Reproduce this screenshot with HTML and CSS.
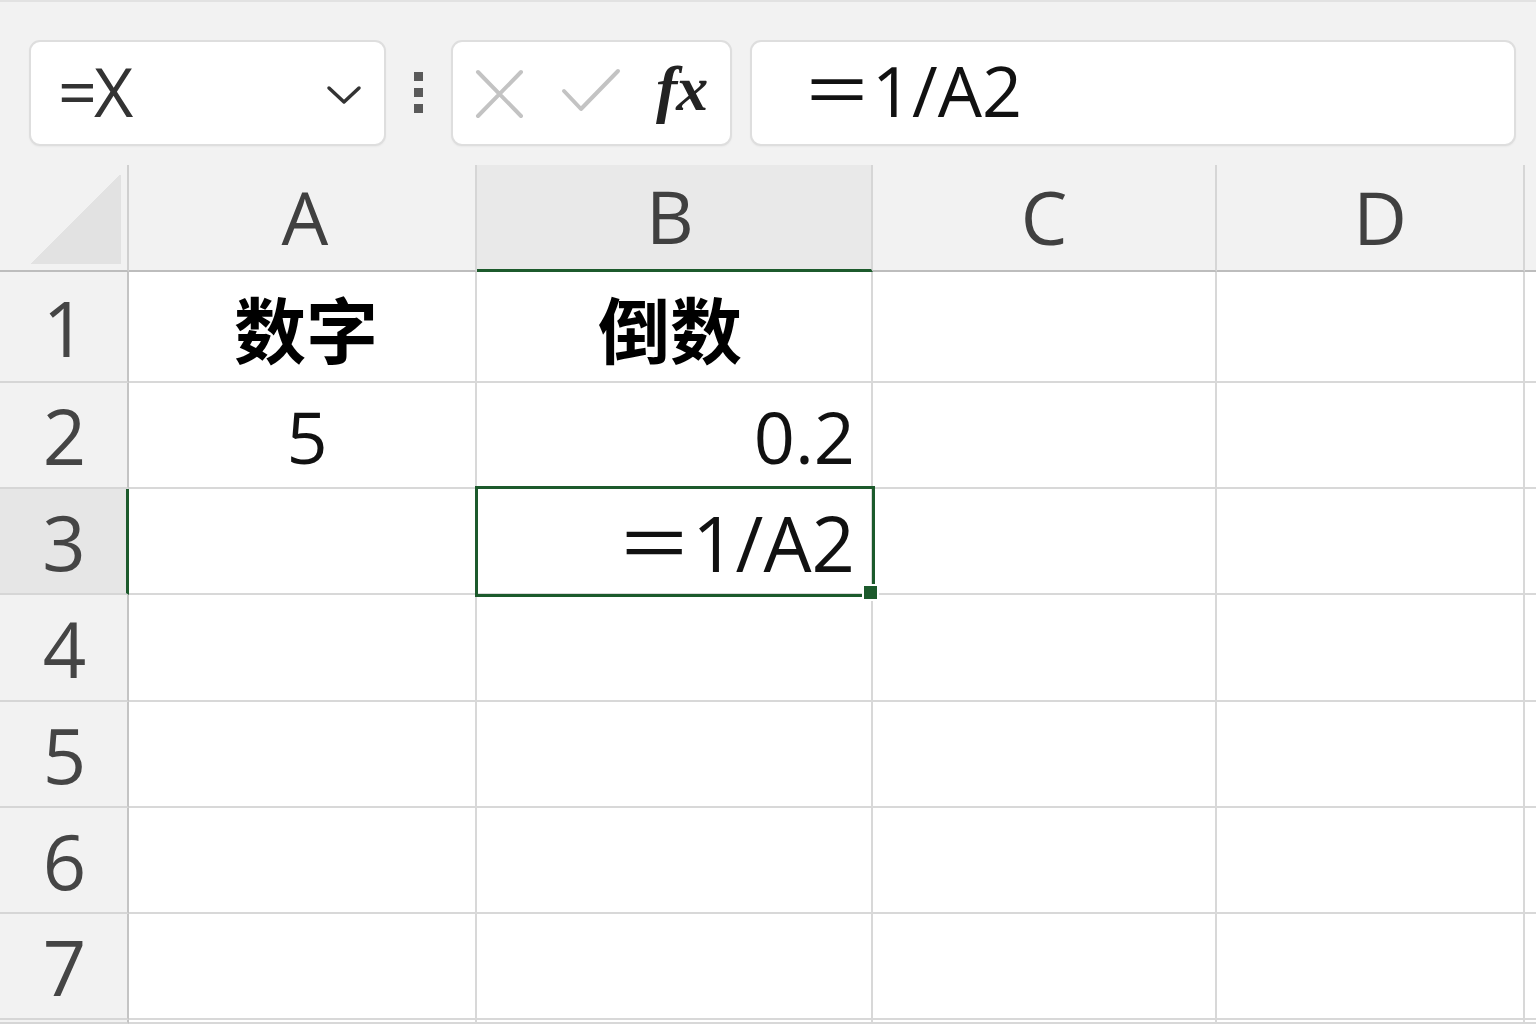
FILE: index.html
```html
<!DOCTYPE html>
<html lang="zh-CN">
<head>
<meta charset="utf-8">
<title>Excel</title>
<link rel="stylesheet" href="styles.css">
</head>
<body>
<div class="app">
  <div class="toolbar">
    <div class="namebox">
      <span class="name">=X</span>
      <svg class="chev" width="36" height="22" viewBox="0 0 36 22"><path d="M3 4 L18 18 L33 4" fill="none" stroke="#333" stroke-width="3.5" stroke-linecap="round" stroke-linejoin="round"/></svg>
    </div>
    <div class="grip"><span></span><span></span><span></span></div>
    <div class="btnbox">
      <svg class="ico" width="52" height="50" viewBox="0 0 52 50"><path d="M4 3 L47 47 M47 3 L4 47" stroke="#c3c3c3" stroke-width="4" stroke-linecap="round"/></svg>
      <svg class="ico" width="62" height="46" viewBox="0 0 62 46"><path d="M4 23 L21 41 L58 3" fill="none" stroke="#c3c3c3" stroke-width="4" stroke-linecap="round" stroke-linejoin="round"/></svg>
      <span class="fx">fx</span>
    </div>
    <div class="formula"><span>＝1/A2</span></div>
  </div>
  <div class="sheet">
    <div class="corner"><div class="tri"></div></div>
    <div class="colh ca">A</div>
    <div class="colh sel">B</div>
    <div class="colh">C</div>
    <div class="colh cd">D</div>
    <div class="colh last"></div>

    <div class="rowh">1</div>
    <div class="cell center bold">数字</div>
    <div class="cell center bold b2">倒数</div>
    <div class="cell"></div>
    <div class="cell"></div>
    <div class="cell"></div>

    <div class="rowh">2</div>
    <div class="cell center">5</div>
    <div class="cell right">0.2</div>
    <div class="cell"></div>
    <div class="cell"></div>
    <div class="cell"></div>

    <div class="rowh sel">3</div>
    <div class="cell"></div>
    <div class="cell right active"><span class="ftext">＝1/A2</span></div>
    <div class="cell"></div>
    <div class="cell"></div>
    <div class="cell"></div>

    <div class="rowh">4</div>
    <div class="cell"></div><div class="cell"></div><div class="cell"></div><div class="cell"></div><div class="cell"></div>
    <div class="rowh">5</div>
    <div class="cell"></div><div class="cell"></div><div class="cell"></div><div class="cell"></div><div class="cell"></div>
    <div class="rowh">6</div>
    <div class="cell"></div><div class="cell"></div><div class="cell"></div><div class="cell"></div><div class="cell"></div>
    <div class="rowh">7</div>
    <div class="cell"></div><div class="cell"></div><div class="cell"></div><div class="cell"></div><div class="cell"></div>
    <div class="rowh"></div>
    <div class="cell"></div><div class="cell"></div><div class="cell"></div><div class="cell"></div><div class="cell"></div>
  </div>
</div>
</body>
</html>
```
FILE: styles.css
```css
* { box-sizing: border-box; }
html, body { margin: 0; padding: 0; }
body {
  width: 1536px;
  height: 1024px;
  overflow: hidden;
  background: #f2f2f2;
  font-family: "Open Sans", "Noto Sans", "Noto Sans CJK SC", sans-serif;
}
.app {
  display: flex;
  flex-direction: column;
  height: 1024px;
  border-top: 2px solid #e2e2e2;
}
.toolbar {
  height: 163px;
  display: flex;
  align-items: flex-start;
  padding-top: 38px;
  padding-left: 29px;
}
.namebox, .btnbox, .formula {
  height: 106px;
  background: #fff;
  border: 2px solid #dedede;
  border-radius: 11px;
  box-shadow: 0 1px 2px rgba(0,0,0,0.04);
  display: flex;
  align-items: center;
}
.namebox {
  width: 357px;
  padding-left: 27px;
  padding-right: 22px;
  justify-content: space-between;
}
.name {
  font-size: 68px;
  color: #333;
  line-height: 1;
  letter-spacing: -3px;
  margin-top: -4px;
}
.chev { margin-top: 4px; }
.grip {
  width: 65px;
  display: flex;
  flex-direction: column;
  align-items: center;
  gap: 7px;
  padding-top: 32px;
}
.grip span {
  width: 9px;
  height: 9px;
  background: #5a5a5a;
}
.btnbox {
  width: 281px;
  padding-left: 21px;
  gap: 32px;
}
.btnbox .ico:first-child { margin-top: 2px; }
.btnbox .ico:nth-child(2) { margin-left: 2px; margin-top: -4px; }
.fx {
  font-family: "Liberation Serif", "DejaVu Serif", serif;
  font-style: italic;
  font-weight: 700;
  font-size: 64px;
  color: #222;
  line-height: 1;
  margin-left: 2px;
  margin-top: -8px;
  letter-spacing: -1px;
}
.formula {
  width: 766px;
  margin-left: 18px;
  padding-left: 50px;
}
.formula span {
  font-size: 70px;
  color: #111;
  line-height: 1;
  margin-top: -6px;
  font-family: "Open Sans", "Noto Sans CJK SC", sans-serif;
}

.sheet {
  flex: 1;
  display: grid;
  grid-template-columns: 129px 348px 396px 344px 308px 1fr;
  grid-template-rows: 107px 111px 106px 106px 107px 106px 106px 106px 1fr;
}
.corner {
  background: #f2f2f2;
  border-right: 2px solid #d0d0d0;
  border-bottom: 2px solid #bdbdbd;
  padding: 10px 6px 6px 30px;
}
.tri {
  width: 100%;
  height: 100%;
  background: linear-gradient(135deg, transparent 50%, #e2e2e2 50%);
}
.colh {
  background: #f2f2f2;
  border-right: 2px solid #d6d6d6;
  border-bottom: 2px solid #bdbdbd;
  display: flex;
  align-items: center;
  justify-content: center;
  font-size: 74px;
  color: #404040;
  line-height: 1;
  padding-bottom: 2px;
}
.colh.ca { padding-left: 6px; }
.colh.cd { padding-left: 20px; }
.colh.sel {
  background: #e9e9e9;
  border-bottom: 3px solid #1c5a2c;
  padding-right: 8px;
}
.colh.last { border-right: none; }
.rowh {
  background: #f2f2f2;
  border-right: 2px solid #c4c4c4;
  border-bottom: 2px solid #d6d6d6;
  display: flex;
  align-items: center;
  justify-content: center;
  font-size: 76px;
  color: #454545;
  line-height: 1;
  padding-left: 2px;
  padding-top: 2px;
}
.rowh.sel {
  background: #e6e6e6;
  border-right: 3px solid #1c5a2c;
}
.cell {
  background: #fff;
  border-right: 2px solid #d8d8d8;
  border-bottom: 2px solid #d8d8d8;
  display: flex;
  align-items: center;
  font-size: 72px;
  color: #111;
  line-height: 1;
  padding-top: 2px;
}
.cell:nth-child(6n) { border-right: none; }
.cell.center { justify-content: center; padding-left: 10px; }
.cell.right { justify-content: flex-end; padding-right: 16px; }
.cell.bold {
  font-family: "Noto Sans CJK SC", sans-serif;
  font-weight: 700;
  font-size: 72px;
  color: #000;
  padding-left: 8px;
  padding-top: 0;
}
.cell.bold.b2 { padding-left: 0; padding-right: 8px; }
.cell.active { position: relative; }
.cell.active::after {
  content: "";
  position: absolute;
  left: -2px;
  top: -3px;
  right: -4px;
  bottom: -4px;
  border: 3px solid #1c5a2c;
}
.cell.active::before {
  content: "";
  position: absolute;
  right: -8px;
  bottom: -8px;
  width: 13px;
  height: 13px;
  background: #1c5a2c;
  border: 2px solid #fff;
  z-index: 2;
}
.ftext {
  font-size: 76px;
  color: #111;
  padding-top: 2px;
}
```
